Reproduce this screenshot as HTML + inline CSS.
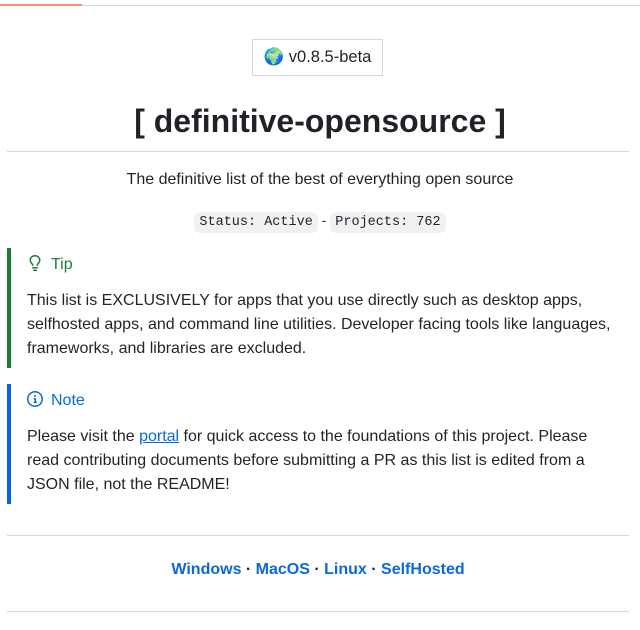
<!DOCTYPE html>
<html><head><meta charset="utf-8"><style>
body{margin:0;background:#fff;font-family:"Liberation Sans",sans-serif;color:#1f2328;width:640px;height:630px;overflow:hidden;position:relative}
.a{position:absolute}
.c{left:0;width:640px;text-align:center}
code{font-family:"Liberation Mono",monospace;font-size:13.5px;background:#eff1f3;border-radius:6px;padding:3px 5px}
.bq{position:absolute;left:7px;width:604px;border-left:4px solid}
.bq p{margin:0;padding-left:16px;font-size:16px;line-height:24px}
a{color:#0969da;text-decoration:underline}
</style></head><body>
<div class="a" style="top:5px;left:0;width:640px;height:1px;background:#d1d9e0"></div>
<div class="a" style="top:4px;left:0;width:82px;height:2px;background:#fd8c73"></div>
<div class="a" style="left:252px;top:39px;width:131px;height:37px;border:1px solid #d1d9e0;box-sizing:border-box;text-align:center;line-height:35px;font-size:16.5px">🌍 v0.8.5-beta</div>
<div class="a c" style="top:101px;font-size:32px;font-weight:bold;line-height:40px">[ definitive-opensource ]</div>
<div class="a" style="top:151px;left:7px;width:622px;height:1px;background:#d1d9e0"></div>
<div class="a c" style="top:170px;font-size:16px;line-height:20px">The definitive list of the best of everything open source</div>
<div class="a c" style="top:210px;font-size:14px;line-height:20px"><code>Status: Active</code> - <code>Projects: 762</code></div>
<div class="bq" style="top:248px;height:120px;border-color:#1a7f37">
<p style="color:#1a7f37;margin-top:5px;margin-bottom:12px"><svg width="16" height="16" viewBox="0 0 16 16" style="vertical-align:-2px;margin-right:8px"><path fill="#1a7f37" d="M8 1.5c-2.363 0-4 1.690-4 3.75 0 .984.424 1.625.984 2.304l.214.253c.223.264.47.556.673.848.284.411.537.896.621 1.49a.75.75 0 0 1-1.484.211c-.04-.282-.163-.547-.37-.847a8.456 8.456 0 0 0-.542-.68c-.084-.1-.173-.205-.268-.32C3.201 7.75 2.5 6.766 2.5 5.25 2.5 2.310 4.863 0 8 0s5.5 2.310 5.5 5.25c0 1.516-.701 2.500-1.328 3.259-.095.115-.184.220-.268.319-.207.245-.383.453-.541.681-.208.3-.33.565-.37.847a.751.751 0 0 1-1.485-.212c.084-.593.337-1.078.621-1.489.203-.292.45-.584.673-.848.075-.088.147-.173.213-.253.561-.679.985-1.320.985-2.304 0-2.060-1.637-3.750-4-3.750ZM5.75 12h4.5a.75.75 0 0 1 0 1.5h-4.5a.75.75 0 0 1 0-1.5ZM6 15.25a.75.75 0 0 1 .75-.75h2.5a.75.75 0 0 1 0 1.5h-2.5a.75.75 0 0 1-.75-.75Z"/></svg>Tip</p>
<p>This list is EXCLUSIVELY for apps that you use directly such as desktop apps, selfhosted apps, and command line utilities. Developer facing tools like languages, frameworks, and libraries are excluded.</p></div>
<div class="bq" style="top:384px;height:120px;border-color:#0969da">
<p style="color:#0969da;margin-top:5px;margin-bottom:12px"><svg width="16" height="16" viewBox="0 0 16 16" style="vertical-align:-2px;margin-right:8px"><path fill="#0969da" d="M0 8a8 8 0 1 1 16 0A8 8 0 0 1 0 8Zm8-6.5a6.5 6.5 0 1 0 0 13 6.5 6.5 0 0 0 0-13ZM6.5 7.75A.75.75 0 0 1 7.25 7h1a.75.75 0 0 1 .75.75v2.75h.25a.75.75 0 0 1 0 1.5h-2a.75.75 0 0 1 0-1.5h.25v-2h-.25a.75.75 0 0 1-.75-.75ZM8 6a1 1 0 1 1 0-2 1 1 0 0 1 0 2Z"/></svg>Note</p>
<p>Please visit the <a>portal</a> for quick access to the foundations of this project. Please read contributing documents before submitting a PR as this list is edited from a JSON file, not the README!</p></div>
<div class="a" style="top:535px;left:7px;width:622px;height:1px;background:#d1d9e0"></div>
<div class="a c" style="top:560px;left:-2px;font-size:16px;line-height:20px;font-weight:bold;color:#0969da">Windows <span style="color:#1f2328">·</span> MacOS <span style="color:#1f2328">·</span> Linux <span style="color:#1f2328">·</span> SelfHosted</div>
<div class="a" style="top:611px;left:7px;width:622px;height:1px;background:#d1d9e0"></div>
</body></html>
